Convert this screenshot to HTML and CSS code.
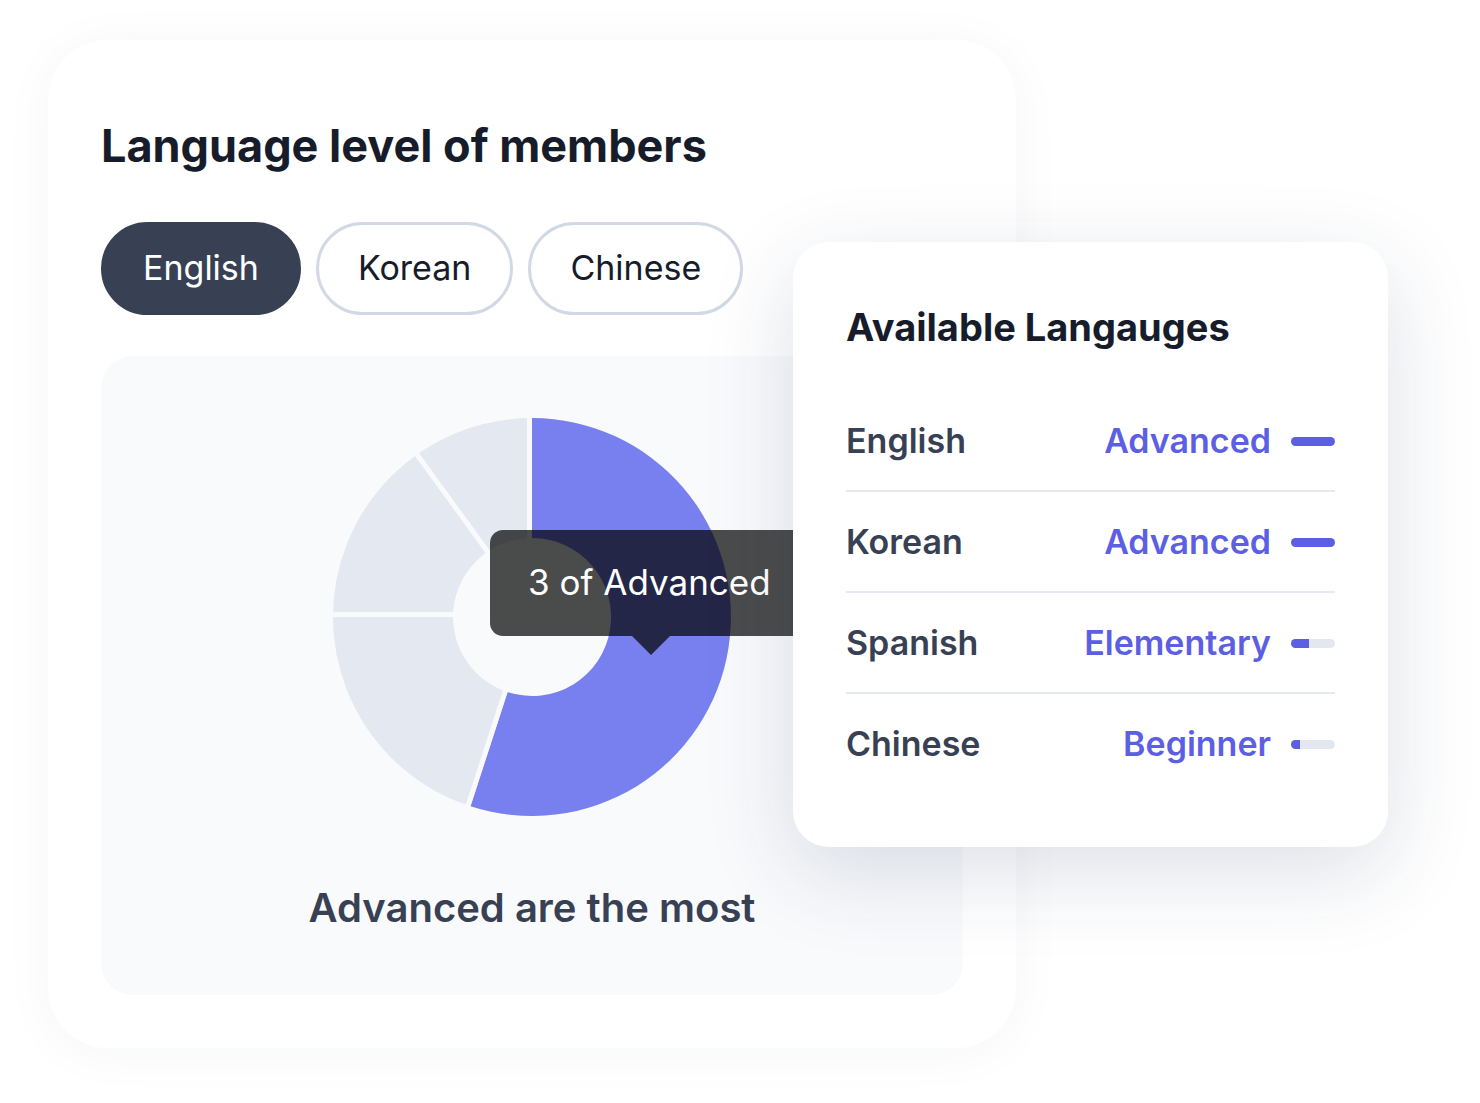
FILE: index.html
```html
<!DOCTYPE html>
<html lang="en">
<head>
<meta charset="utf-8">
<meta name="viewport" content="width=device-width, initial-scale=1">
<title>Language level of members</title>
<link rel="stylesheet" href="styles.css">
</head>
<body>
<main class="board">
  <section class="card levels">
    <h1 class="levels-title">Language level of members</h1>
    <div class="tabs">
      <button class="tab tab-active" type="button" aria-pressed="true">English</button>
      <button class="tab" type="button" aria-pressed="false">Korean</button>
      <button class="tab" type="button" aria-pressed="false">Chinese</button>
    </div>
    <figure class="panel">
      <div class="chart">
        <svg class="donut" viewBox="-199 -199 398 398" role="img" aria-label="55% of members are advanced">
          <circle class="ring" r="139"/>
          <path class="slice" d="M0-199A199 199 0 1 1-61.5 189.3L-24.4 75.1A79 79 0 1 0 0-79Z"/>
          <rect class="gap" x="-5" y="-201" width="5" height="124"/>
          <rect class="gap" y="-201" width="5" height="124" transform="rotate(198)"/>
          <rect class="gap" y="-201" width="5" height="124" transform="rotate(270)"/>
          <rect class="gap" y="-201" width="5" height="124" transform="rotate(324)"/>
        </svg>
        <div class="tooltip" role="tooltip">3 of Advanced</div>
      </div>
      <figcaption class="caption">Advanced are the most</figcaption>
    </figure>
  </section>

  <section class="card available">
    <h2 class="available-title">Available Langauges</h2>
    <ul class="languages">
      <li class="language"><span class="name">English</span><label class="level" for="english">Advanced</label><progress class="bar" id="english" value="100" max="100"></progress></li>
      <li class="language"><span class="name">Korean</span><label class="level" for="korean">Advanced</label><progress class="bar" id="korean" value="100" max="100"></progress></li>
      <li class="language"><span class="name">Spanish</span><label class="level" for="spanish">Elementary</label><progress class="bar" id="spanish" value="40" max="100"></progress></li>
      <li class="language"><span class="name">Chinese</span><label class="level" for="chinese">Beginner</label><progress class="bar" id="chinese" value="20" max="100"></progress></li>
    </ul>
  </section>
</main>
</body>
</html>
```
FILE: styles.css
```css
* {
  box-sizing: border-box;
}

body {
  margin: 0;
  background: #fff;
  color: #171c2b;
  font-family: Inter, "Liberation Sans", sans-serif;
}

h1,
h2,
ul,
figure {
  margin: 0;
  padding: 0;
}

/* The second card overlaps the first in the middle column. */
.board {
  display: grid;
  grid-template-columns: 745fr 223fr 372fr;
  align-items: start;
  padding: 40px 92px 55px 48px;
}

.card {
  grid-row: 1;
  background: #fff;
}

.levels {
  grid-column: 1 / 3;
  padding: 79px 53px 53px;
  border-radius: 60px;
  box-shadow: 0 5px 53px rgba(30, 48, 85, 0.04);
}

.levels-title {
  font-size: 45px;
  font-weight: 700;
  line-height: 54px;
}

.tabs {
  display: flex;
  gap: 15px;
  margin: 49px 0 41px;
}

.tab {
  padding: 21px 39px 22px;
  border: 3px solid #d2d9e4;
  border-radius: 47px;
  background: #fff;
  color: #171c2b;
  font: 400 34px/44px Inter, "Liberation Sans", sans-serif;
}

.tab-active {
  border-color: #374153;
  background: #374153;
  color: #fff;
}

.panel {
  padding: 62px 40px 61px;
  border-radius: 32px;
  background: #f9fafc;
}

.chart {
  position: relative;
  width: 398px;
  margin: 0 auto 65px;
}

.donut {
  display: block;
  width: 100%;
}

.ring {
  fill: none;
  stroke: #e3e8f1;
  stroke-width: 120;
}

.slice {
  fill: #7880ef;
}

.gap {
  fill: #f9fafc;
}

.tooltip {
  position: absolute;
  top: 112px;
  left: 157px;
  padding: 30px 42px 32px 38px;
  border-radius: 13px;
  background: rgba(0, 0, 0, 0.7);
  color: #fff;
  font-size: 35px;
  font-weight: 400;
  line-height: 44px;
  white-space: nowrap;
}

.tooltip::after {
  content: "";
  position: absolute;
  top: 100%;
  left: 50%;
  margin-left: -19px;
  border: 19px solid transparent;
  border-top-color: rgba(0, 0, 0, 0.7);
  border-bottom-width: 0;
}

.caption {
  color: #374153;
  font-size: 40px;
  font-weight: 600;
  line-height: 53px;
  text-align: center;
}

.available {
  z-index: 1;
  grid-column: 2 / 4;
  margin-top: 202px;
  padding: 61px 53px 54px;
  border-radius: 36px;
  box-shadow: 0 26px 88px rgba(30, 48, 85, 0.15);
}

.available-title {
  margin-bottom: 40px;
  font-size: 38px;
  font-weight: 700;
  line-height: 48px;
}

.languages {
  list-style: none;
}

.language {
  display: flex;
  align-items: center;
  padding: 28px 0 27px;
  font-size: 34px;
  font-weight: 600;
  line-height: 44px;
}

.language + .language {
  border-top: 2px solid #e5e9f1;
}

.name {
  flex: 1;
  color: #374153;
}

.level {
  margin-right: 20px;
  color: #5c5fe4;
}

.bar {
  width: 44px;
  height: 9px;
  overflow: hidden;
  border: 0;
  border-radius: 5px;
  background: #e3e8f0;
  appearance: none;
}

.bar::-webkit-progress-bar {
  background: #e3e8f0;
}

.bar::-webkit-progress-value {
  background: #5c5fe4;
}

.bar::-moz-progress-bar {
  background: #5c5fe4;
}
```
